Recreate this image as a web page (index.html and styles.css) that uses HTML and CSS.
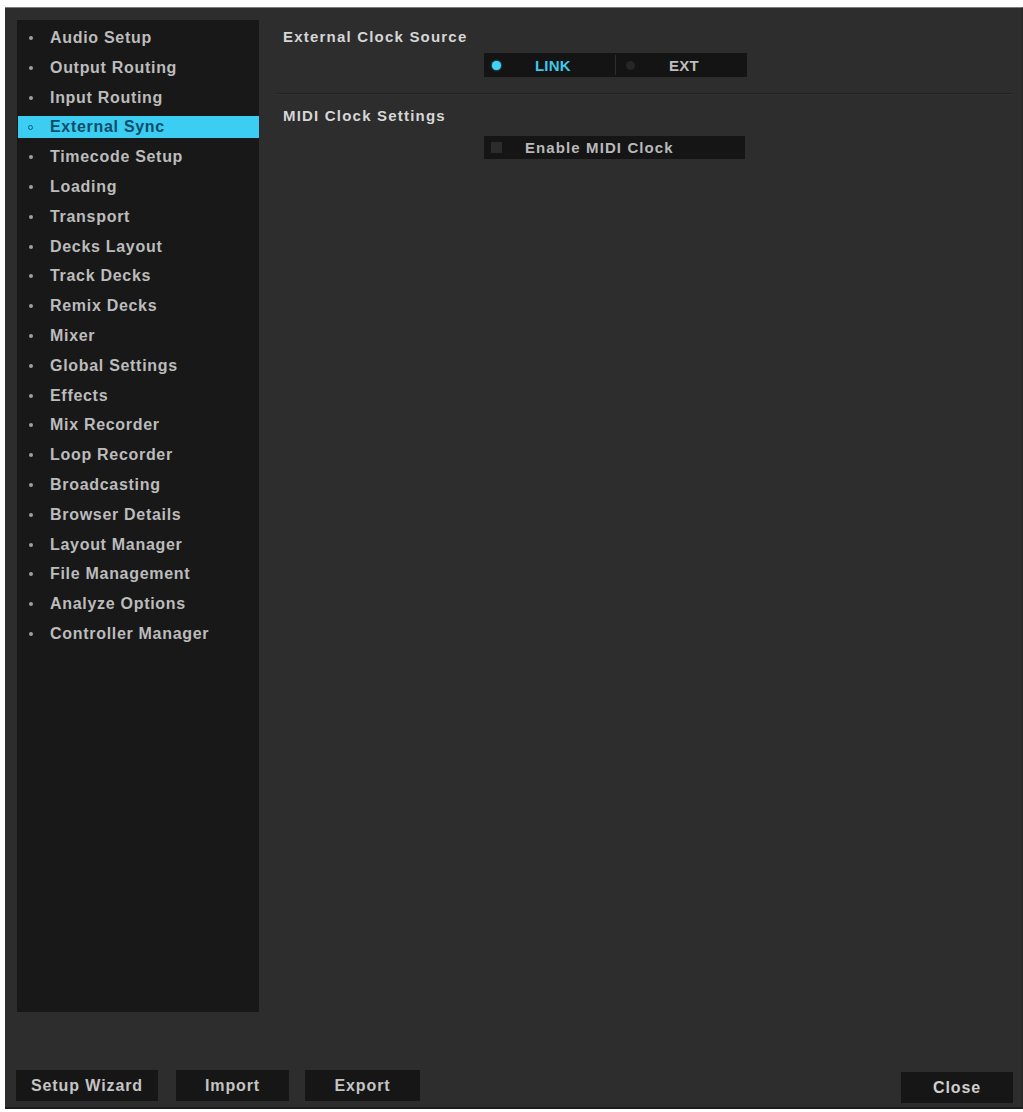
FILE: index.html
```html
<!DOCTYPE html>
<html>
<head>
<meta charset="utf-8">
<link rel="stylesheet" href="styles.css">
</head>
<body>
<div class="window">
  <div class="top">
    <nav class="sidebar">
      <div class="item"><span class="dot"></span>Audio Setup</div>
      <div class="item"><span class="dot"></span>Output Routing</div>
      <div class="item"><span class="dot"></span>Input Routing</div>
      <div class="item active"><span class="ring"></span>External Sync</div>
      <div class="item"><span class="dot"></span>Timecode Setup</div>
      <div class="item"><span class="dot"></span>Loading</div>
      <div class="item"><span class="dot"></span>Transport</div>
      <div class="item"><span class="dot"></span>Decks Layout</div>
      <div class="item"><span class="dot"></span>Track Decks</div>
      <div class="item"><span class="dot"></span>Remix Decks</div>
      <div class="item"><span class="dot"></span>Mixer</div>
      <div class="item"><span class="dot"></span>Global Settings</div>
      <div class="item"><span class="dot"></span>Effects</div>
      <div class="item"><span class="dot"></span>Mix Recorder</div>
      <div class="item"><span class="dot"></span>Loop Recorder</div>
      <div class="item"><span class="dot"></span>Broadcasting</div>
      <div class="item"><span class="dot"></span>Browser Details</div>
      <div class="item"><span class="dot"></span>Layout Manager</div>
      <div class="item"><span class="dot"></span>File Management</div>
      <div class="item"><span class="dot"></span>Analyze Options</div>
      <div class="item"><span class="dot"></span>Controller Manager</div>
    </nav>
    <main class="main">
      <div class="heading first">External Clock Source</div>
      <div class="segmented">
        <div class="seg on"><span class="led lit"></span><span class="seg-label">LINK</span></div>
        <div class="seg-divider"></div>
        <div class="seg"><span class="led"></span><span class="seg-label">EXT</span></div>
      </div>
      <div class="separator"></div>
      <div class="heading">MIDI Clock Settings</div>
      <div class="checkbox-btn"><span class="box"></span><span class="cb-label">Enable MIDI Clock</span></div>
    </main>
  </div>
  <div class="bottom">
    <div class="btn wizard">Setup Wizard</div>
    <div class="btn import">Import</div>
    <div class="btn export">Export</div>
    <div class="spacer"></div>
    <div class="btn close">Close</div>
  </div>
</div>
</body>
</html>
```
FILE: styles.css
```css
html, body {
  margin: 0;
  padding: 0;
  background: #ffffff;
}
body {
  font-family: "Liberation Sans", Arial, Helvetica, sans-serif;
  font-weight: bold;
}
.window {
  margin: 7px 0 0 5px;
  width: 1018px;
  height: 1102px;
  box-sizing: border-box;
  background: #2d2d2d;
  border-top: 1px solid #7a7a7a;
  border-bottom: 2px solid #1c1c1c;
  border-right: 1px solid #262626;
  display: flex;
  flex-direction: column;
}
.top {
  display: flex;
  padding: 12px 0 0 12px;
}
.sidebar {
  width: 242px;
  height: 992px;
  box-sizing: border-box;
  background: #181818;
  padding-top: 7px;
}
.item {
  height: 22px;
  margin-bottom: 7.8px;
  display: flex;
  align-items: center;
  padding-left: 12px;
  font-size: 16px;
  letter-spacing: 0.7px;
  color: #bcbcbc;
}
.dot {
  width: 4px;
  height: 4px;
  border-radius: 50%;
  background: #a0a0a0;
  margin-right: 17px;
  margin-left: 0;
}
.item.active {
  background: #3ccdf3;
  color: #0d4c68;
  margin-left: 1px;
  padding-left: 10px;
}
.ring {
  width: 3px;
  height: 3px;
  border-radius: 50%;
  border: 1.5px solid #135a78;
  margin-right: 17px;
}
.main {
  flex: 1;
  margin-left: 18px;
  margin-right: 10px;
}
.heading {
  padding-left: 6px;
  font-size: 15px;
  line-height: 20px;
  letter-spacing: 1.2px;
  color: #d6d6d6;
  margin-top: 11px;
}
.heading.first {
  margin-top: 7px;
}
.segmented {
  margin: 6px 0 0 207px;
  width: 263px;
  height: 24px;
  display: flex;
  background: #141414;
}
.seg {
  flex: 1;
  display: flex;
  align-items: center;
  font-size: 15px;
  letter-spacing: 0.2px;
  color: #bdbdbd;
}
.seg.on {
  color: #3fc7ea;
}
.seg-divider {
  width: 1px;
  margin: 2px 1px;
  background: #2e2e2e;
}
.led {
  width: 9px;
  height: 9px;
  border-radius: 50%;
  background: #262626;
  margin-left: 9px;
  margin-right: 0;
}
.led.lit {
  background: #41d3f7;
  box-shadow: 0 0 2px #41d3f7;
  margin-left: 8px;
}
.seg.on .seg-label {
  margin-left: 34px;
}
.seg .seg-label {
  margin-left: 34px;
}
.separator {
  height: 1px;
  background: #202020;
  margin-top: 16px;
  border-bottom: 1px solid #333333;
}
.checkbox-btn {
  margin: 10px 0 0 207px;
  width: 261px;
  height: 23px;
  background: #151515;
  display: flex;
  align-items: center;
}
.box {
  width: 11px;
  height: 11px;
  background: #2c2c2c;
  margin-left: 7px;
}
.cb-label {
  margin-left: 23px;
  font-size: 15px;
  letter-spacing: 1.1px;
  color: #b9b9b9;
}
.bottom {
  display: flex;
  align-items: flex-start;
  margin-top: 58px;
  padding: 0 9px 0 11px;
}
.btn {
  height: 31px;
  background: #161616;
  display: flex;
  align-items: center;
  justify-content: center;
  font-size: 16px;
  letter-spacing: 0.9px;
  color: #c4c4c4;
}
.wizard { width: 142px; }
.import { width: 113px; margin-left: 18px; }
.export { width: 115px; margin-left: 16px; }
.spacer { flex: 1; }
.close { width: 112px; margin-top: 2px; color: #cfcfcf; }
```
